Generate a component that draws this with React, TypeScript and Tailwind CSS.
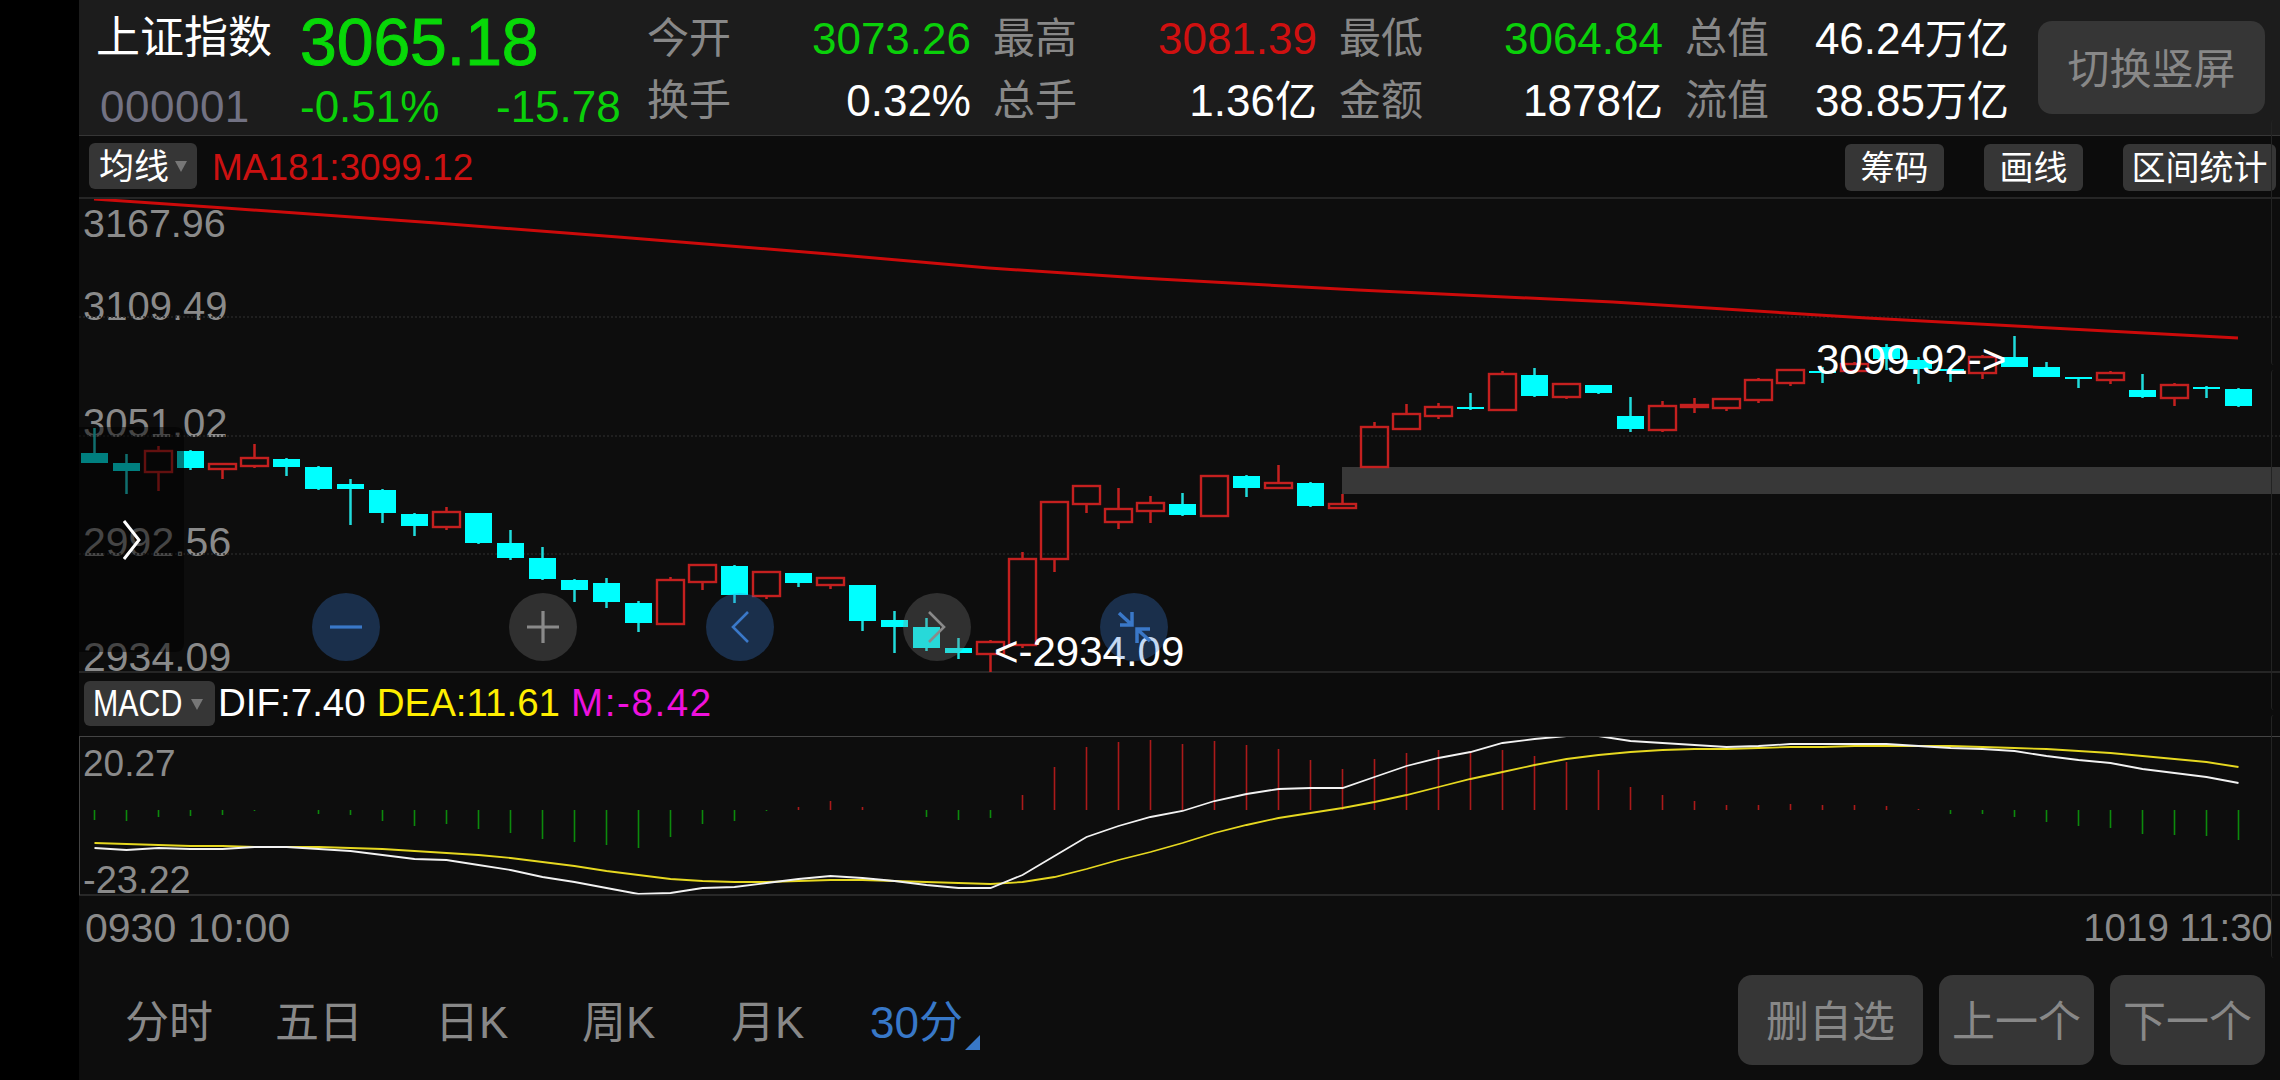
type Candle = ['r' | 'c', number, number, number, number]

// kind, high, body top, body bottom, low (page pixels)
const candles: Candle[] = [
    ['c', 428, 453, 463, 463], ['c', 454, 463, 471, 494], ['r', 446, 451, 472, 491], ['c', 450, 451, 468, 470],
    ['r', 464, 464, 469, 479], ['r', 444, 458, 466, 468], ['c', 458, 459, 467, 476], ['c', 466, 467, 489, 490],
    ['c', 479, 484, 489, 525], ['c', 489, 490, 513, 523], ['c', 513, 514, 526, 536], ['r', 507, 512, 527, 530],
    ['c', 513, 513, 543, 544], ['c', 530, 543, 558, 560], ['c', 547, 558, 579, 580], ['c', 579, 580, 590, 602],
    ['c', 578, 583, 602, 608], ['c', 601, 603, 623, 632], ['r', 577, 580, 624, 624], ['r', 565, 565, 582, 590],
    ['c', 565, 566, 595, 603], ['r', 571, 572, 596, 599], ['c', 573, 573, 583, 587], ['r', 577, 578, 585, 589],
    ['c', 585, 585, 621, 631], ['c', 611, 620, 627, 653], ['c', 618, 627, 648, 651], ['c', 638, 648, 653, 659],
    ['r', 640, 642, 654, 672], ['r', 552, 559, 645, 648], ['r', 501, 502, 559, 572], ['r', 485, 486, 504, 513],
    ['r', 488, 509, 522, 529], ['r', 496, 503, 511, 523], ['c', 493, 504, 515, 516], ['r', 476, 476, 516, 516],
    ['c', 475, 476, 488, 497], ['r', 465, 483, 488, 489], ['c', 482, 483, 506, 507], ['r', 494, 504, 508, 508],
    ['r', 422, 427, 467, 467], ['r', 404, 414, 429, 430], ['r', 403, 407, 416, 419], ['c', 393, 407, 409, 410],
    ['r', 371, 374, 410, 410], ['c', 368, 375, 396, 397], ['r', 383, 384, 397, 399], ['c', 385, 385, 393, 394],
    ['c', 397, 416, 429, 432], ['r', 401, 406, 430, 432], ['r', 398, 405, 407, 413], ['r', 399, 399, 408, 411],
    ['r', 378, 380, 400, 403], ['r', 370, 370, 383, 386], ['c', 367, 371, 372, 383], ['r', 362, 364, 371, 371],
    ['c', 344, 347, 359, 370], ['c', 357, 360, 369, 384], ['c', 369, 369, 371, 382], ['r', 355, 357, 373, 379],
    ['c', 336, 357, 367, 367], ['c', 362, 367, 377, 377], ['c', 377, 377, 379, 388], ['r', 371, 373, 380, 384],
    ['c', 374, 390, 397, 398], ['r', 383, 385, 398, 406], ['c', 386, 387, 389, 398], ['c', 388, 389, 406, 407],
]

const macdBars = [
    820, 821, 817, 816, 815, 811, 810, 814, 815, 821, 826, 824, 829, 833, 839, 842, 845, 848, 837, 824, 821, 811,
    807, 801, 807, 810, 817, 820, 818, 795, 767, 747, 742, 740, 744, 741, 745, 749, 760, 769, 759, 753, 750, 752,
    750, 756, 762, 770, 787, 795, 801, 805, 805, 804, 805, 805, 806, 809, 814, 814, 817, 822, 826, 828, 834, 835,
    836, 840,
]

const dea = [
    843, 844, 845, 846, 846, 847, 847, 847, 848, 849, 851, 853, 855, 858, 862, 866, 871, 875, 879, 881, 882, 882,
    881, 880, 880, 881, 882, 883, 884, 882, 877, 869, 860, 852, 843, 833, 825, 818, 813, 808, 802, 795, 787, 779,
    772, 765, 759, 755, 752, 750, 749, 749, 748, 747, 747, 746, 746, 746, 746, 747, 748, 749, 751, 753, 756, 759,
    762, 767,
]

const dif = [
    848, 850, 848, 849, 849, 847, 847, 849, 851, 855, 859, 860, 865, 870, 877, 882, 888, 894, 893, 888, 887, 883,
    879, 876, 878, 881, 885, 888, 888, 875, 856, 837, 826, 817, 811, 801, 794, 789, 788, 788, 777, 766, 758, 752,
    743, 739, 736, 736, 741, 743, 745, 747, 746, 744, 744, 744, 744, 746, 748, 749, 751, 756, 760, 763, 769, 773,
    777, 783,
]

const maLine =
    '94,199 225,208 436,223 618,237 829,254 989,268 1140,278 1358,290 1613,302 1867,318 2238,338'

const candleX = (i: number) => 94.5 + 32 * i
const toPoints = (ys: number[]) => ys.map((y, i) => `${candleX(i)},${y}`).join(' ')

const stats = [
    { label: '今开', value: '3073.26', unit: '', color: 'text-[#0ad00a]' },
    { label: '最高', value: '3081.39', unit: '', color: 'text-[#d01010]' },
    { label: '最低', value: '3064.84', unit: '', color: 'text-[#0ad00a]' },
    { label: '总值', value: '46.24', unit: '万亿', color: 'text-white' },
    { label: '换手', value: '0.32%', unit: '', color: 'text-white' },
    { label: '总手', value: '1.36', unit: '亿', color: 'text-white' },
    { label: '金额', value: '1878', unit: '亿', color: 'text-white' },
    { label: '流值', value: '38.85', unit: '万亿', color: 'text-white' },
]

function Header() {
    return (
        <header className="flex h-[136px] shrink-0 border-b border-[#363636] bg-[#1c1c1c]">
            <div className="ml-[17px] flex w-[551px] shrink-0 flex-col">
                <div className="flex h-[84px] items-center">
                    <span className="mb-[8px] w-[204px] text-[44px] leading-none text-white">上证指数</span>
                    <span className="text-[66px] leading-none text-[#08d808] [-webkit-text-stroke:1px_#08d808]">3065.18</span>
                </div>
                <div className="flex h-[46px] items-center text-[44px] leading-none">
                    <span className="ml-[4px] w-[200px] tracking-[0.5px] text-[#727283]">000001</span>
                    <span className="w-[196px] text-[#0ad00a]">-0.51%</span>
                    <span className="text-[#0ad00a]">-15.78</span>
                </div>
            </div>
            <div className="grid w-[1362px] shrink-0 grid-cols-4 grid-rows-[62px_62px] gap-x-[22px] pt-[8px]">
                {stats.map((stat) => (
                    <div key={stat.label} className="flex items-center justify-between leading-none">
                        <span className="text-[42px] text-[#888888]">{stat.label}</span>
                        <span className={`text-[44px] ${stat.color}`}>
                            {stat.value}
                            {stat.unit && <span className="text-[42px]">{stat.unit}</span>}
                        </span>
                    </div>
                ))}
            </div>
            <button className="ml-[29px] mt-[21px] h-[93px] w-[227px] rounded-[14px] bg-[#363636] pt-[3px] text-[42px] text-[#888888]">
                切换竖屏
            </button>
        </header>
    )
}

function Toolbar() {
    return (
        <div className="flex h-[63px] shrink-0 items-start border-b-2 border-[#262626] bg-[#0c0c0c] pt-[7px]">
            <button className="ml-[10px] flex h-[46px] w-[108px] items-center rounded-[6px] bg-[#363636] pl-[10px] text-[35px] leading-none text-white">
                均线
                <span className="ml-[6px] h-0 w-0 border-x-[6px] border-t-[11px] border-x-transparent border-t-[#777777]" />
            </button>
            <span className="ml-[15px] mt-[5px] text-[37px] leading-[40px] text-[#cc1111]">MA181:3099.12</span>
            <div className="ml-auto mr-[4px] mt-[1px] flex gap-[40px] text-[34px] leading-none text-white">
                <button className="h-[47px] w-[99px] rounded-[6px] bg-[#363636]">筹码</button>
                <button className="h-[47px] w-[99px] rounded-[6px] bg-[#363636]">画线</button>
                <button className="h-[47px] w-[153px] rounded-[6px] bg-[#363636]">区间统计</button>
            </div>
        </div>
    )
}

function CandleChart() {
    return (
        <svg className="absolute left-0 top-0" width={2201} height={473} viewBox="79 199 2201 473">
            {[317, 436, 554].map((y) => (
                <line key={y} x1={79} x2={2280} y1={y} y2={y} stroke="#262626" strokeWidth={1.5} strokeDasharray="2 2" />
            ))}
            <rect x={1342} y={467} width={938} height={27} fill="#383838" />
            {candles.map(([kind, high, top, bottom, low], i) => {
                const x = candleX(i)
                const color = kind === 'r' ? '#c4201f' : '#00ffff'
                const wick = kind === 'r' ? '#c4201f' : '#20dcdc'
                return (
                    <g key={i}>
                        <line x1={x} x2={x} y1={high} y2={top} stroke={wick} strokeWidth={2.5} />
                        <line x1={x} x2={x} y1={bottom} y2={low} stroke={wick} strokeWidth={2.5} />
                        {kind === 'r' ? (
                            <rect x={x - 13.5} y={top} width={27} height={bottom - top} fill="none" stroke={color} strokeWidth={2.4} />
                        ) : (
                            <rect x={x - 13.5} y={top} width={27} height={Math.max(bottom - top, 2)} fill={color} />
                        )}
                    </g>
                )
            })}
            <polyline points={maLine} fill="none" stroke="#cc0a0a" strokeWidth={3} />
        </svg>
    )
}

function MacdChart() {
    return (
        <svg className="absolute left-0 top-0" width={2201} height={160} viewBox="79 736 2201 160">
            {macdBars.map((y, i) => (
                <line
                    key={i}
                    x1={candleX(i)}
                    x2={candleX(i)}
                    y1={810}
                    y2={y}
                    stroke={y < 810 ? '#aa1a1a' : '#0c8a0c'}
                    strokeWidth={1.6}
                />
            ))}
            <polyline points={toPoints(dea)} fill="none" stroke="#e6d820" strokeWidth={1.8} />
            <polyline points={toPoints(dif)} fill="none" stroke="#f2f2f2" strokeWidth={1.8} />
            <line x1={79} x2={2280} y1={736.5} y2={736.5} stroke="#444444" />
            <line x1={79} x2={2280} y1={895} y2={895} stroke="#444444" />
            <line x1={79.5} x2={79.5} y1={736} y2={895} stroke="#444444" />
        </svg>
    )
}

function Chevron({ dir, w = 18, h = 32, stroke = 2.6 }: { dir: 'left' | 'right'; w?: number; h?: number; stroke?: number }) {
    const points = dir === 'right' ? `1,1 ${w - 2},${h / 2} 1,${h - 1}` : `${w - 1},1 2,${h / 2} ${w - 1},${h - 1}`
    return (
        <svg width={w} height={h} viewBox={`0 0 ${w} ${h}`} fill="none" stroke="currentColor" strokeWidth={stroke}>
            <polyline points={points} />
        </svg>
    )
}

function CompressIcon() {
    return (
        <svg width={68} height={68} viewBox="0 0 68 68" fill="none" stroke="#3a78c8" strokeWidth={3.5}>
            <path d="M19 20 32 32M32 19V32H20" />
            <path d="M50 48 37 36M50 36H37V50" />
        </svg>
    )
}

function MinusIcon() {
    return (
        <svg width={34} height={34} viewBox="0 0 34 34" stroke="currentColor" strokeWidth={3.2}>
            <path d="M1 17H33" />
        </svg>
    )
}

function PlusIcon() {
    return (
        <svg width={34} height={34} viewBox="0 0 34 34" stroke="currentColor" strokeWidth={3.2}>
            <path d="M1 17H33M17 1V33" />
        </svg>
    )
}

const priceLabels = [
    { text: '3167.96', className: 'top-[25px] text-[39.5px]' },
    { text: '3109.49', className: 'top-[107px] text-[40px]' },
    { text: '3051.02', className: 'top-[224px] text-[40px]' },
    { text: '2992.56', className: 'top-[343px] text-[41px]' },
    { text: '2934.09', className: 'top-[458px] text-[41px]' },
]

function PriceChart() {
    return (
        <section className="relative h-[474px] shrink-0 border-b-2 border-[#262626]">
            {priceLabels.map((label) => (
                <span
                    key={label.text}
                    className={`absolute left-[4px] -translate-y-1/2 leading-none text-[#8a8a8a] ${label.className}`}
                >
                    {label.text}
                </span>
            ))}
            <CandleChart />
            <span className="absolute left-[1737px] top-[161px] -translate-y-1/2 text-[42px] leading-none text-white">
                3099.92-&gt;
            </span>
            <span className="absolute left-[915px] top-[453px] -translate-y-1/2 text-[42px] leading-none text-white">
                &lt;-2934.09
            </span>
            <div className="absolute left-0 top-[228px] flex h-[225px] w-[105px] items-center rounded-r-[8px] bg-black/50 pl-[44px] text-white">
                <Chevron dir="right" h={40} stroke={3} />
            </div>
            <div className="absolute left-[233px] top-[394px] flex gap-[129px]">
                <button className="flex h-[68px] w-[68px] items-center justify-center rounded-full bg-[#397fd9]/30 text-[#3a78c8]">
                    <MinusIcon />
                </button>
                <button className="flex h-[68px] w-[68px] items-center justify-center rounded-full bg-[#808080]/30 text-[#8a8a8a]">
                    <PlusIcon />
                </button>
                <button className="flex h-[68px] w-[68px] items-center justify-center rounded-full bg-[#397fd9]/30 text-[#3a78c8]">
                    <Chevron dir="left" />
                </button>
                <button className="flex h-[68px] w-[68px] items-center justify-center rounded-full bg-[#808080]/30 text-[#8a8a8a]">
                    <Chevron dir="right" />
                </button>
                <button className="h-[68px] w-[68px] rounded-full bg-[#397fd9]/30">
                    <CompressIcon />
                </button>
            </div>
        </section>
    )
}

function MacdBar() {
    return (
        <div className="flex h-[63px] shrink-0 items-center bg-[#0c0c0c] pb-[2px] text-[38.5px] leading-none">
            <button className="ml-[5px] flex h-[45px] w-[131px] items-center overflow-hidden rounded-[6px] bg-[#363636] pl-[9px] text-white">
                <span className="w-[90px] origin-left scale-x-[0.82] whitespace-nowrap text-[37px]">MACD</span>
                <span className="ml-[8px] mt-[2px] h-0 w-0 border-x-[6px] border-t-[11px] border-x-transparent border-t-[#777777]" />
            </button>
            <span className="ml-[3px] text-white">DIF:7.40</span>
            <span className="ml-[11px] text-[#ffee00]">DEA:11.61</span>
            <span className="ml-[11px] tracking-[1.6px] text-[#ee11dd]">M:-8.42</span>
        </div>
    )
}

const tabs = ['分时', '五日', '日K', '周K', '月K']
const tabWidths = ['w-[150px]', 'w-[160px]', 'w-[147px]', 'w-[149px]', 'w-[139px]']

function Footer() {
    return (
        <div className="flex min-h-0 flex-1 flex-col">
            <div className="flex h-[64px] shrink-0 items-center justify-between pl-[6px] pr-[7px] text-[#8a8a8a]">
                <span className="text-[41px] leading-none">0930 10:00</span>
                <span className="text-[38.5px] leading-none">1019 11:30</span>
            </div>
            <div className="flex flex-1 items-start">
                <div className="ml-[46px] mt-[41px] flex items-center text-[44px] leading-[44px] text-[#888888]">
                    {tabs.map((tab, i) => (
                        <span key={tab} className={tabWidths[i]}>
                            {tab}
                        </span>
                    ))}
                    <span className="relative text-[#3878c8]">
                        30分
                        <span className="absolute -right-[17px] bottom-[-5px] h-0 w-0 border-b-[15px] border-l-[15px] border-b-[#3878c8] border-l-transparent" />
                    </span>
                </div>
                <div className="ml-auto mr-[15px] mt-[15px] flex gap-[16px] text-[43px] text-[#888888]">
                    <button className="h-[90px] w-[185px] rounded-[14px] bg-[#363636] pt-[4px]">删自选</button>
                    <button className="h-[90px] w-[155px] rounded-[14px] bg-[#363636] pt-[4px]">上一个</button>
                    <button className="h-[90px] w-[155px] rounded-[14px] bg-[#363636] pt-[4px]">下一个</button>
                </div>
            </div>
        </div>
    )
}

export default function App() {
    return (
        <main className="relative flex h-[1080px] w-[2280px] overflow-hidden bg-black [font-family:'Liberation_Sans','Noto_Sans_CJK_SC',sans-serif]">
            <div className="w-[79px] shrink-0 bg-black" />
            <div className="flex min-w-0 flex-1 flex-col bg-[#0d0d0d]">
                <Header />
                <Toolbar />
                <PriceChart />
                <MacdBar />
                <section className="relative h-[160px] shrink-0">
                    <MacdChart />
                    <span className="absolute left-[4px] top-[27px] -translate-y-1/2 text-[37px] leading-none text-[#8a8a8a]">
                        20.27
                    </span>
                    <span className="absolute left-[4px] top-[144px] -translate-y-1/2 text-[38px] leading-none text-[#8a8a8a]">
                        -23.22
                    </span>
                </section>
                <Footer />
            </div>
            <div className="absolute right-[6px] top-[120px] h-[245px] w-[3px] rounded-l-[4px] border-l border-[#232323]" />
            <div className="absolute right-[6px] top-[370px] h-[340px] w-[3px] rounded-l-[4px] border-l border-[#232323]" />
            <div className="absolute right-[6px] top-[715px] h-[243px] w-[3px] rounded-l-[4px] border-l border-[#232323]" />
        </main>
    )
}
